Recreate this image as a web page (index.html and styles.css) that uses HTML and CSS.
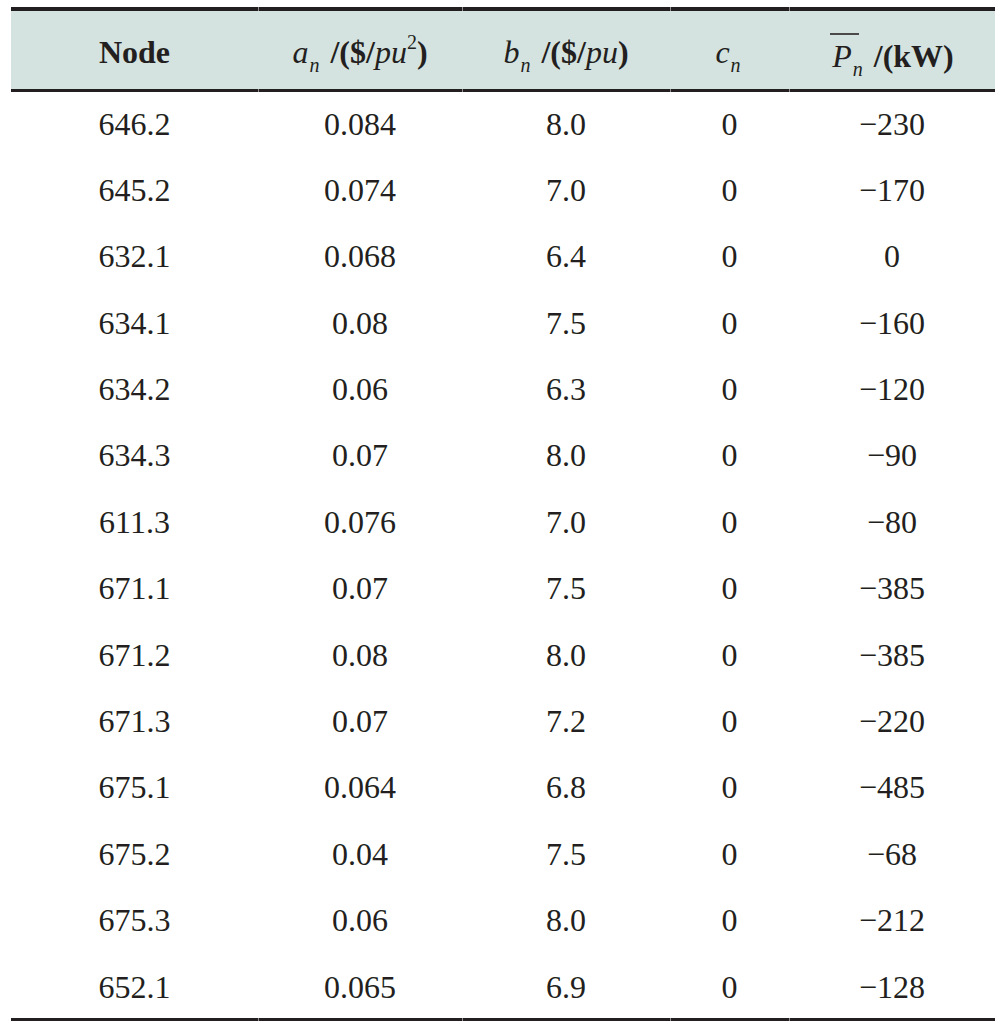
FILE: index.html
```html
<!DOCTYPE html>
<html>
<head>
<meta charset="utf-8">
<link rel="stylesheet" href="styles.css">
</head>
<body>
<table class="data">
  <thead>
    <tr>
      <th class="c1"><b>Node</b></th>
      <th class="c2"><i>a</i><sub><i>n</i></sub> <b>/($/</b><i>pu</i><sup>2</sup><b>)</b></th>
      <th class="c3"><i>b</i><sub><i>n</i></sub> <b>/($/</b><i>pu</i><b>)</b></th>
      <th class="c4"><i>c</i><sub><i>n</i></sub></th>
      <th class="c5"><span class="over"><i>P</i></span><sub><i>n</i></sub> <b>/(kW)</b></th>
    </tr>
  </thead>
  <tbody>
    <tr class="first"><td>646.2</td><td>0.084</td><td>8.0</td><td>0</td><td>−230</td></tr>
    <tr><td>645.2</td><td>0.074</td><td>7.0</td><td>0</td><td>−170</td></tr>
    <tr><td>632.1</td><td>0.068</td><td>6.4</td><td>0</td><td>0</td></tr>
    <tr><td>634.1</td><td>0.08</td><td>7.5</td><td>0</td><td>−160</td></tr>
    <tr><td>634.2</td><td>0.06</td><td>6.3</td><td>0</td><td>−120</td></tr>
    <tr><td>634.3</td><td>0.07</td><td>8.0</td><td>0</td><td>−90</td></tr>
    <tr><td>611.3</td><td>0.076</td><td>7.0</td><td>0</td><td>−80</td></tr>
    <tr><td>671.1</td><td>0.07</td><td>7.5</td><td>0</td><td>−385</td></tr>
    <tr><td>671.2</td><td>0.08</td><td>8.0</td><td>0</td><td>−385</td></tr>
    <tr><td>671.3</td><td>0.07</td><td>7.2</td><td>0</td><td>−220</td></tr>
    <tr><td>675.1</td><td>0.064</td><td>6.8</td><td>0</td><td>−485</td></tr>
    <tr><td>675.2</td><td>0.04</td><td>7.5</td><td>0</td><td>−68</td></tr>
    <tr><td>675.3</td><td>0.06</td><td>8.0</td><td>0</td><td>−212</td></tr>
    <tr class="last"><td>652.1</td><td>0.065</td><td>6.9</td><td>0</td><td>−128</td></tr>
  </tbody>
</table>
</body>
</html>
```
FILE: styles.css
```css
html, body {
  margin: 0;
  background: #ffffff;
}
body {
  padding: 7px 0 0 11px;
  font-family: "Liberation Serif", "Times New Roman", serif;
  color: #231f20;
}
.data {
  border-collapse: separate;
  border-spacing: 0;
  width: 984px;
  table-layout: fixed;
  font-size: 32px;
}
.data th {
  position: relative;
  background: #d5e3e0;
  height: 74px;
  padding: 4px 0 0 0;
  font-weight: normal;
  text-align: center;
  vertical-align: middle;
  border-top: 4px solid #231f20;
  border-bottom: 3px solid #231f20;
  line-height: 1;
  white-space: nowrap;
}
.data th + th::before {
  content: "";
  position: absolute;
  left: 0;
  top: -4px;
  bottom: -3px;
  width: 1px;
  background: linear-gradient(#8f8f8f 0 4px, transparent 4px calc(100% - 3px), #8f8f8f calc(100% - 3px));
}
.c1 { width: 247px; }
.c2 { width: 204px; }
.c3 { width: 208px; }
.c4 { width: 119px; }
.c5 { width: 206px; }
.data td {
  position: relative;
  height: 62.42px;
  padding: 4px 0 0 0;
  text-align: center;
  vertical-align: middle;
  line-height: 1;
}
.data tr.first td {
  height: 61px;
  padding-top: 1.5px;
}
.data tr.last td {
  border-bottom: 3px solid #231f20;
}
.data tr.last td + td::before {
  content: "";
  position: absolute;
  left: 0;
  bottom: -3px;
  width: 1px;
  height: 3px;
  background: #8f8f8f;
}
.data sub {
  font-size: 20px;
  vertical-align: -9px;
  line-height: 0;
  margin-left: 1px;
  margin-right: 3px;
}
.data sup {
  font-size: 20px;
  vertical-align: 14px;
  line-height: 0;
}
.data b {
  font-weight: bold;
}
.over {
  display: inline-block;
  border-top: 2px solid #4a4a4a;
  padding: 5px 7px 0 2px;
  margin: 0 -7px 0 0;
  line-height: 1;
}
```
